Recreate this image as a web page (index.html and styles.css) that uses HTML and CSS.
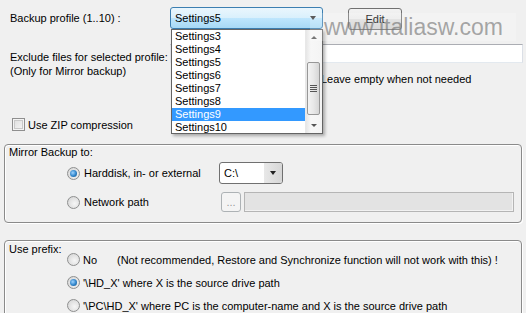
FILE: index.html
```html
<!DOCTYPE html>
<html lang="en">
<head>
    <meta charset="UTF-8">
    <title>Backup settings</title>
    <link rel="stylesheet" href="styles.css">
</head>
<body>
    <div class="page">
        <div class="row-profile">
            <label class="lbl-main">Backup profile (1..10) :</label>
            <div class="combo combo-focus">
                <span>Settings5</span>
                <span class="arrow"></span>
            </div>
            <button class="btn btn-edit">Edit</button>
        </div>

        <div class="row-exclude">
            <div class="lbl-main lbl-two">Exclude files for selected profile:<br>(Only for Mirror backup)</div>
            <div class="exclude-right">
                <div class="textbox"></div>
                <div class="hint">Leave empty when not needed</div>
            </div>
        </div>

        <div class="row-check">
            <span class="check"></span>
            <span>Use ZIP compression</span>
        </div>

        <fieldset class="group group-mirror">
            <div class="group-title">Mirror Backup to:</div>
            <div class="mirror-row first">
                <div class="opt opt-wide"><span class="radio on"></span><span>Harddisk, in- or external</span></div>
                <div class="combo combo-drive">
                    <span>C:\</span>
                    <span class="drive-btn"><span class="arrow"></span></span>
                </div>
            </div>
            <div class="mirror-row second">
                <div class="opt opt-wide"><span class="radio"></span><span>Network path</span></div>
                <button class="btn btn-dots" disabled>...</button>
                <div class="textbox textbox-off"></div>
            </div>
        </fieldset>

        <fieldset class="group group-prefix">
            <div class="group-title prefix-title">Use prefix:</div>
            <div class="prefix-list">
                <div class="opt"><span class="radio"></span><span class="no-lbl">No</span><span>(Not recommended, Restore and Synchronize function will not work with this) !</span></div>
                <div class="opt"><span class="radio on"></span><span>'\HD_X' where X is the source drive path</span></div>
                <div class="opt"><span class="radio"></span><span>'\PC\HD_X' where PC is the computer-name and X is the source drive path</span></div>
            </div>
        </fieldset>
    </div>

    <!-- open list of the profile combo -->
    <div class="droplist">
        <div class="items">
            <div>Settings3</div>
            <div>Settings4</div>
            <div>Settings5</div>
            <div>Settings6</div>
            <div>Settings7</div>
            <div>Settings8</div>
            <div class="sel">Settings9</div>
            <div>Settings10</div>
        </div>
        <div class="scroll">
            <span class="sb-up"></span>
            <span class="thumb"><span class="grip"></span></span>
            <span class="sb-down"></span>
        </div>
    </div>

    <div class="watermark">www.italiasw.com</div>
</body>
</html>
```

FILE: styles.css
```css
body {
    margin: 0;
    width: 526px;
    height: 313px;
    overflow: hidden;
    background-color: #f0f0f0;
    font-family: 'Liberation Sans', Arial, sans-serif;
    font-size: 11px;
    color: #000;
    position: relative;
}

.page {
    padding-top: 7px;
}

/* first row */
.row-profile {
    display: flex;
    align-items: flex-start;
    height: 23px;
}

.lbl-main {
    width: 160px;
    padding-left: 10px;
    line-height: 22px;
}

.combo {
    box-sizing: border-box;
    height: 22px;
    display: flex;
    align-items: center;
    justify-content: space-between;
    border-radius: 3px;
}

.combo-focus {
    width: 153px;
    border: 1px solid #3c7fb1;
    padding: 0 4px 0 4px;
    background: linear-gradient(#eaf6fd 0%, #d9f0fc 50%, #bee6fd 51%, #a7d9f5 100%);
}

.arrow {
    width: 0;
    height: 0;
    border-left: 3.5px solid transparent;
    border-right: 3.5px solid transparent;
    border-top: 4px solid #222;
}

.combo-focus .arrow {
    border-top-color: #333;
    margin-right: 2px;
}

.btn {
    box-sizing: border-box;
    font-family: inherit;
    font-size: 11px;
    border: 1px solid #707070;
    border-radius: 3px;
    background: linear-gradient(#f2f2f2 0%, #ebebeb 50%, #dddddd 51%, #cfcfcf 100%);
    padding: 0;
    color: #000;
}

.btn-edit {
    width: 54px;
    height: 22px;
    margin-left: 25px;
    margin-top: 1px;
}

/* exclude row */
.row-exclude {
    display: flex;
    margin-top: 14px;
}

.lbl-two {
    line-height: 14px;
    padding-top: 6px;
}

.exclude-right {
    width: 353px;
}

.textbox {
    box-sizing: border-box;
    height: 19px;
    background: #fff;
    border: 1px solid #abadb3;
    border-left-color: #e2e3ea;
    border-right-color: #dbdfe6;
    border-bottom-color: #e3e9ef;
}

.hint {
    margin: 9px 0 0 151px;
    line-height: 14px;
}

/* checkbox */
.row-check {
    display: flex;
    align-items: center;
    gap: 3px;
    margin: 32px 0 0 12px;
    height: 13px;
}

.check {
    box-sizing: border-box;
    width: 13px;
    height: 13px;
    border: 1px solid #8f8f8f;
    background: linear-gradient(135deg, #dcdcdc, #f8f8f8);
    box-shadow: inset 0 0 0 1px #f4f4f4, inset 0 0 0 2px #c9c9c9;
}

/* group boxes */
.group {
    box-sizing: border-box;
    margin: 0 4px;
    padding: 1px 4px 0 4px;
    width: 518px;
    border: 1px solid #8a8a8a;
    border-radius: 4px;
    box-shadow: inset 1px 1px 0 #fff, 1px 1px 0 #fff;
}

.group-mirror {
    margin-top: 13px;
    height: 79px;
}

.group-title {
    line-height: 13px;
}

.mirror-row {
    display: flex;
    align-items: center;
    padding-left: 58px;
}

.mirror-row.first {
    margin-top: 3px;
    height: 22px;
}

.mirror-row.second {
    margin-top: 8px;
    height: 20px;
}

.opt {
    display: flex;
    align-items: center;
    gap: 4px;
}

.opt-wide {
    width: 152px;
}

.radio {
    box-sizing: border-box;
    width: 13px;
    height: 13px;
    border-radius: 50%;
    border: 1px solid #8e8f8f;
    background: radial-gradient(circle at 60% 60%, #f6f6f6 0%, #dcdcdc 70%, #cfcfcf 100%);
    display: flex;
    align-items: center;
    justify-content: center;
    flex-shrink: 0;
}

.radio.on::after {
    content: "";
    width: 7px;
    height: 7px;
    border-radius: 50%;
    background: radial-gradient(circle at 40% 40%, #9fd3ff 0%, #2d83c9 55%, #1c4f80 100%);
}

.combo-drive {
    width: 64px;
    border: 1px solid #707070;
    background: #fff;
    padding-left: 4px;
}

.drive-btn {
    width: 18px;
    height: 20px;
    display: flex;
    align-items: center;
    justify-content: center;
    border-radius: 0 2px 2px 0;
    background: linear-gradient(90deg, #e8e8e8, #d6d6d6);
}

.btn-dots {
    width: 20px;
    height: 20px;
    margin-left: 2px;
    border-color: #adb2b5;
    background: #f4f4f4;
    color: #9a9a9a;
    line-height: 14px;
}

.textbox-off {
    width: 270px;
    height: 20px;
    margin-left: 3px;
    background: #e3e3e3;
    border: 1px solid #b5b5b5;
    box-shadow: inset -1px -1px 0 #f2f2f2;
}

.group-prefix {
    margin-top: 17px;
    height: 80px;
    display: flex;
    padding-top: 2px;
}

.prefix-title {
    width: 58px;
    flex-shrink: 0;
}

.prefix-list {
    padding-top: 5px;
}

.prefix-list .opt {
    height: 23px;
    gap: 3px;
}

.no-lbl {
    width: 31px;
}

/* open drop down list */
.droplist {
    position: absolute;
    left: 171px;
    top: 29px;
    width: 152px;
    height: 105px;
    box-sizing: border-box;
    border: 1px solid #646464;
    background: #fff;
    display: flex;
    box-shadow: 2px 2px 3px rgba(0, 0, 0, 0.3);
}

.items {
    flex: 1;
}

.items div {
    height: 13px;
    line-height: 13px;
    padding-left: 3px;
}

.items .sel {
    background-color: #3399ff;
    color: #fff;
}

.scroll {
    width: 16px;
    position: relative;
    background: linear-gradient(90deg, #e6e6e6, #f7f7f7 30%, #f4f4f4);
    border-left: 1px solid #e8e8e8;
}

.sb-up, .sb-down {
    position: absolute;
    left: 5px;
    width: 0;
    height: 0;
    border-left: 3px solid transparent;
    border-right: 3px solid transparent;
}

.sb-up {
    top: 6px;
    border-bottom: 3px solid #555;
}

.sb-down {
    bottom: 6px;
    border-top: 3px solid #555;
}

.thumb {
    position: absolute;
    left: 1px;
    top: 32px;
    width: 13px;
    height: 53px;
    box-sizing: border-box;
    border: 1px solid #979797;
    border-radius: 2px;
    background: linear-gradient(90deg, #f3f3f3, #e8e8e8 50%, #d6d6d6);
    display: flex;
    align-items: center;
    justify-content: center;
}

.grip {
    width: 7px;
    height: 7px;
    background: repeating-linear-gradient(#555 0 1px, transparent 1px 2px);
}

.watermark {
    position: absolute;
    left: 310px;
    top: 13px;
    width: 206px;
    padding-left: 14px;
    box-sizing: border-box;
    font-size: 23px;
    line-height: 28px;
    color: rgba(110, 110, 110, 0.6);
    background: rgba(255, 255, 255, 0.2);
}
```
